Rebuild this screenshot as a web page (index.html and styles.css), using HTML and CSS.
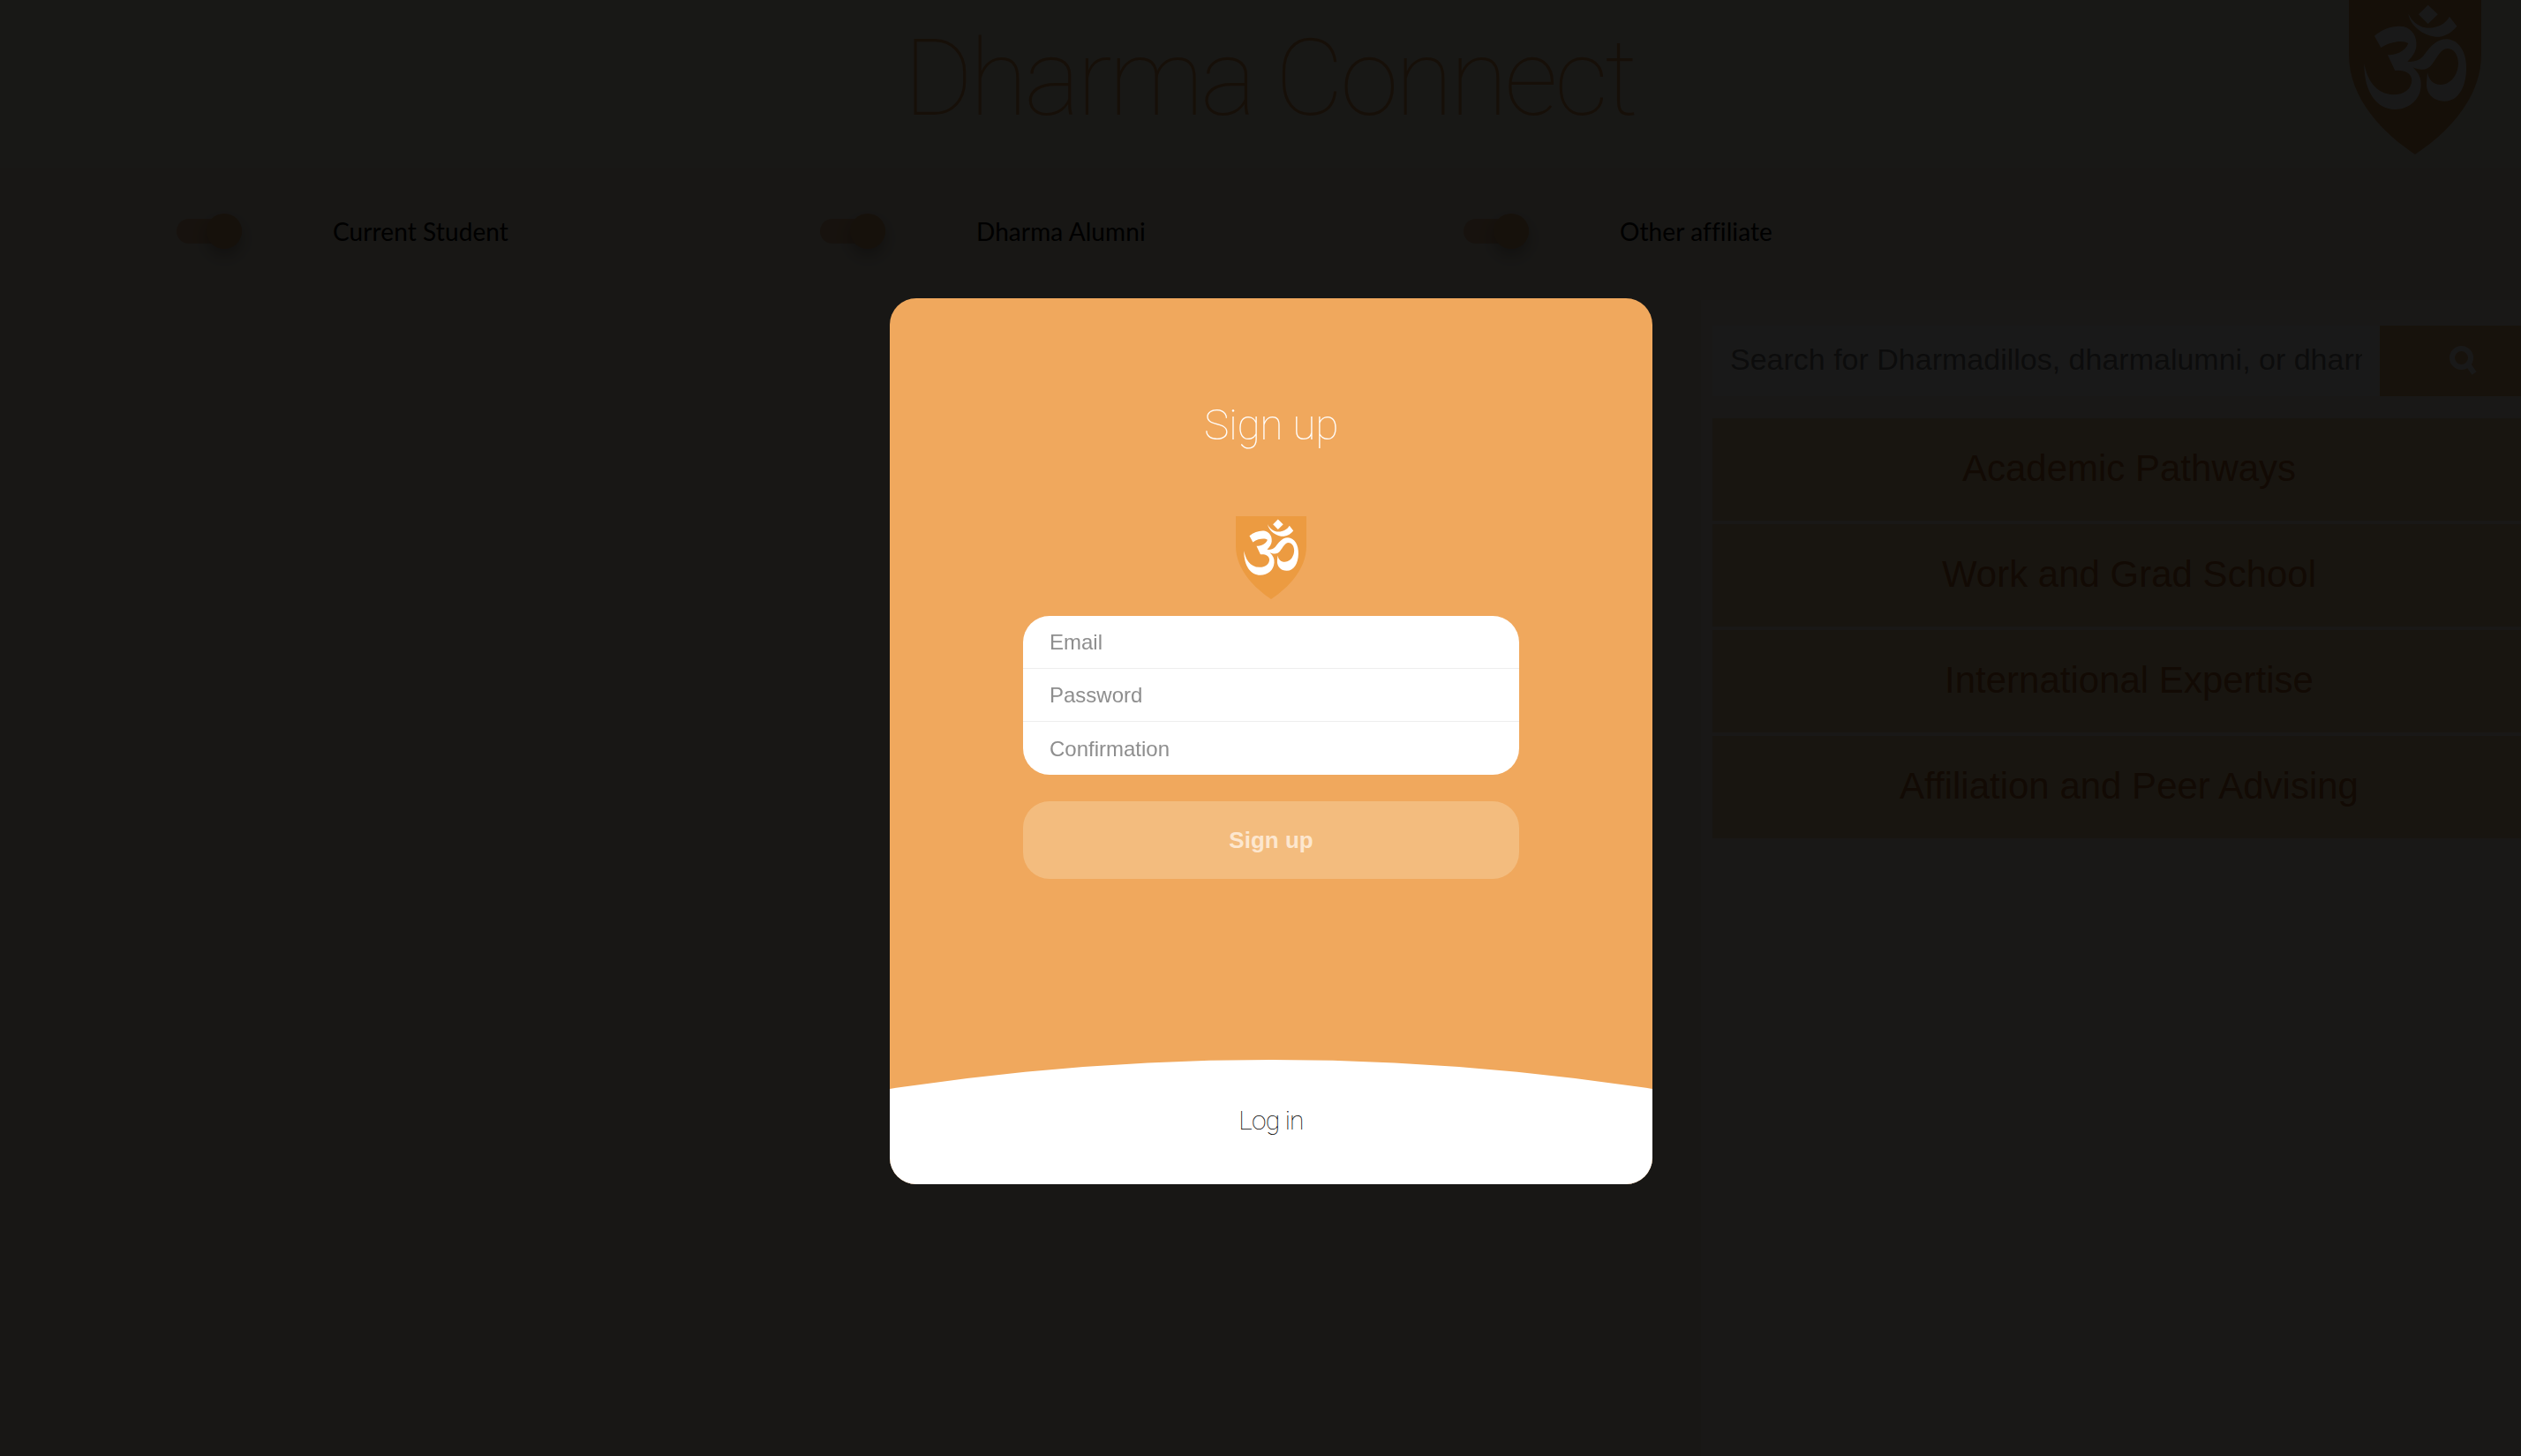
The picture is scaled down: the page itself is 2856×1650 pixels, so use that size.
FILE: index.html
```html
<!DOCTYPE html>
<html lang="en">
<head>
<meta charset="utf-8">
<title>Dharma Connect</title>
<link rel="stylesheet" href="styles.css">
</head>
<body>
<svg class="defs" width="0" height="0" aria-hidden="true">
  <symbol id="crest" viewBox="0 0 450 528">
    <path class="crest-shield" d="M0 0H450V190C450 340 330 460 225 528C120 460 0 340 0 190Z"/>
    <g class="crest-om" transform="translate(-183 0)">
      <path d="M452 20L485 52L452 84L420 52Z"/>
      <path d="M385 50C395 100 450 130 490 128C515 125 535 110 550 92L525 60C510 85 485 98 455 98C425 98 400 80 385 50Z"/>
      <path d="M270 125C300 100 340 88 370 94C400 102 415 130 412 160C410 180 400 195 382 212C400 215 420 210 435 195C455 170 475 137 515 136C560 138 584 185 582 240C580 300 555 347 508 347C470 347 445 320 447 285L450 250C455 275 470 292 497 291C535 288 556 250 555 215C553 185 537 168 518 168C495 170 485 195 465 222C452 240 430 245 400 232C420 250 430 270 428 295C425 345 385 375 340 375C280 375 235 320 235 220C245 270 270 323 335 325C370 325 397 305 397 275C395 250 370 240 340 243L315 190C340 190 375 180 385 150C370 140 330 140 292 165Z"/>
    </g>
  </symbol>
</svg>

<div class="page">
  <header class="header">
    <h1 class="brand">Dharma Connect</h1>
    <svg class="header-crest"><use href="#crest"/></svg>
  </header>

  <div class="filters">
    <label class="filter"><span class="toggle"><span class="knob"></span></span><span class="filter-name">Current Student</span></label>
    <label class="filter"><span class="toggle"><span class="knob"></span></span><span class="filter-name">Dharma Alumni</span></label>
    <label class="filter"><span class="toggle"><span class="knob"></span></span><span class="filter-name">Other affiliate</span></label>
  </div>

  <main class="content">
    <div class="content-main"></div>
    <aside class="sidebar">
      <form class="search">
        <input class="search-input" type="text" placeholder="Search for Dharmadillos, dharmalumni, or dharma mentors">
        <button class="search-button" type="button" aria-label="Search">
          <svg class="search-icon" viewBox="0 0 32 34"><circle cx="13.5" cy="13.5" r="10.5"/><path d="M21 21L28 31"/></svg>
        </button>
      </form>
      <nav class="topics">
        <a class="topic">Academic Pathways</a>
        <a class="topic">Work and Grad School</a>
        <a class="topic">International Expertise</a>
        <a class="topic">Affiliation and Peer Advising</a>
      </nav>
    </aside>
  </main>
</div>

<div class="overlay">
  <section class="modal">
    <div class="modal-body">
      <h2 class="modal-title">Sign up</h2>
      <svg class="modal-crest"><use href="#crest"/></svg>
      <div class="fields">
        <input class="field" type="email" placeholder="Email">
        <input class="field" type="password" placeholder="Password">
        <input class="field" type="password" placeholder="Confirmation">
      </div>
      <button class="submit" type="button">Sign up</button>
    </div>
    <div class="modal-foot"><a class="login-link">Log in</a></div>
  </section>
</div>
</body>
</html>
```

FILE: styles.css
```css
* { box-sizing: border-box; }

html, body {
  margin: 0;
  height: 100%;
  overflow: hidden;
}

body {
  background: #efe6d4;
  font-family: "Liberation Sans", Arial, sans-serif;
}

.defs { display: block; height: 0; }

.page {
  width: 2884px;
  height: 1650px;
  display: flex;
  flex-direction: column;
}

.crest-shield { fill: var(--shield, #ec9b41); }
.crest-om { fill: #fff; }

/* header */
.header {
  position: relative;
  height: 190px;
  padding-right: 8px;
  display: flex;
  justify-content: center;
  background: #f6efe0;
}

.brand {
  margin: 19px 0 0;
  font: 100 120px/140px Roboto, sans-serif;
  letter-spacing: -3.8px;
  color: #dc9a58;
}

.header-crest {
  --shield: #d49a58;
  position: absolute;
  left: 2661px;
  top: -1px;
  width: 150px;
  height: 176px;
}

/* filters */
.filters {
  height: 150px;
  padding: 57px 0 0 200px;
  display: flex;
  align-items: flex-start;
}

.filter {
  width: 729px;
  height: 30px;
  display: flex;
  align-items: center;
}

.toggle {
  width: 74px;
  height: 28px;
  border-radius: 14px;
  background: #e6b78a;
  display: flex;
  justify-content: flex-end;
  align-items: center;
}

.knob {
  flex: none;
  width: 40px;
  height: 40px;
  border-radius: 50%;
  background: #e0a86f;
  box-shadow: 0 8px 16px rgba(0, 0, 0, .25);
}

.filter-name {
  margin-left: 103px;
  font: 400 28px/30px Lato, sans-serif;
  letter-spacing: .1px;
  color: #000;
}

/* main */
.content {
  flex: 1;
  display: flex;
}

.content-main { width: 1927px; }

.sidebar {
  flex: 1;
  padding: 29px 0 0 13px;
  background: #f8f5ea;
}

.search {
  display: flex;
  height: 80px;
}

.search-input {
  width: 756px;
  height: 80px;
  padding: 0 20px 4px;
  border: 0;
  outline: 0;
  background: #fff;
  font: 400 34px "Liberation Sans", Arial, sans-serif;
}

.search-input::placeholder {
  color: #7c7c7c;
  opacity: 1;
}

.search-button {
  flex: 1;
  padding: 0 0 0 79px;
  border: 0;
  background: #ecb27a;
  text-align: left;
}

.search-icon {
  display: block;
  width: 32px;
  height: 34px;
  fill: none;
  stroke: #fff;
  stroke-width: 6;
}

.topics {
  margin-top: 25px;
  display: flex;
  flex-direction: column;
  gap: 4px;
}

.topic {
  height: 116px;
  padding-bottom: 3px;
  display: flex;
  align-items: center;
  justify-content: center;
  background: #f0d8a4;
  font-size: 42px;
  color: #b86428;
}

/* sign-up dialog */
.overlay {
  position: fixed;
  left: 0;
  top: 0;
  width: 2880px;
  height: 1650px;
  padding-top: 338px;
  display: flex;
  justify-content: center;
  align-items: flex-start;
  background: rgba(0, 0, 0, .9);
}

.modal {
  width: 864px;
  height: 1004px;
  display: flex;
  flex-direction: column;
  border-radius: 30px;
  overflow: hidden;
  background: #f0a85d;
}

.modal-body {
  flex: 1;
  padding-top: 111px;
  display: flex;
  flex-direction: column;
  align-items: center;
}

.modal-title {
  margin: 0;
  height: 66px;
  font: 100 48px/66px Roboto, sans-serif;
  letter-spacing: -.4px;
  color: #fff;
}

.modal-crest {
  display: block;
  margin-top: 70px;
  width: 80px;
  height: 94px;
}

.fields {
  margin-top: 19px;
  width: 562px;
  height: 180px;
  display: flex;
  flex-direction: column;
  border-radius: 30px;
  overflow: hidden;
  background: #fff;
}

.field {
  flex: 1;
  width: 100%;
  min-height: 0;
  padding: 0 30px;
  border: 0;
  border-bottom: 1px solid #eeeeee;
  outline: 0;
  background: transparent;
  font: 400 24px "Liberation Sans", Arial, sans-serif;
}

.field:last-child {
  padding-top: 1px;
  border-bottom: 0;
}

.field::placeholder {
  color: #8e8e8e;
  opacity: 1;
}

.submit {
  margin-top: 30px;
  width: 562px;
  height: 88px;
  border: 0;
  border-radius: 30px;
  background: #f3bc7e;
  font: 700 26px "Liberation Sans", Arial, sans-serif;
  color: #fde7cf;
}

.modal-foot {
  flex: none;
  height: 141px;
  padding-top: 49px;
  text-align: center;
  background: #fff;
  clip-path: circle(2844px at 50% 2844px);
}

.login-link {
  font: 150 30px/40px Roboto, sans-serif;
  letter-spacing: -.8px;
  color: #000;
}
```
